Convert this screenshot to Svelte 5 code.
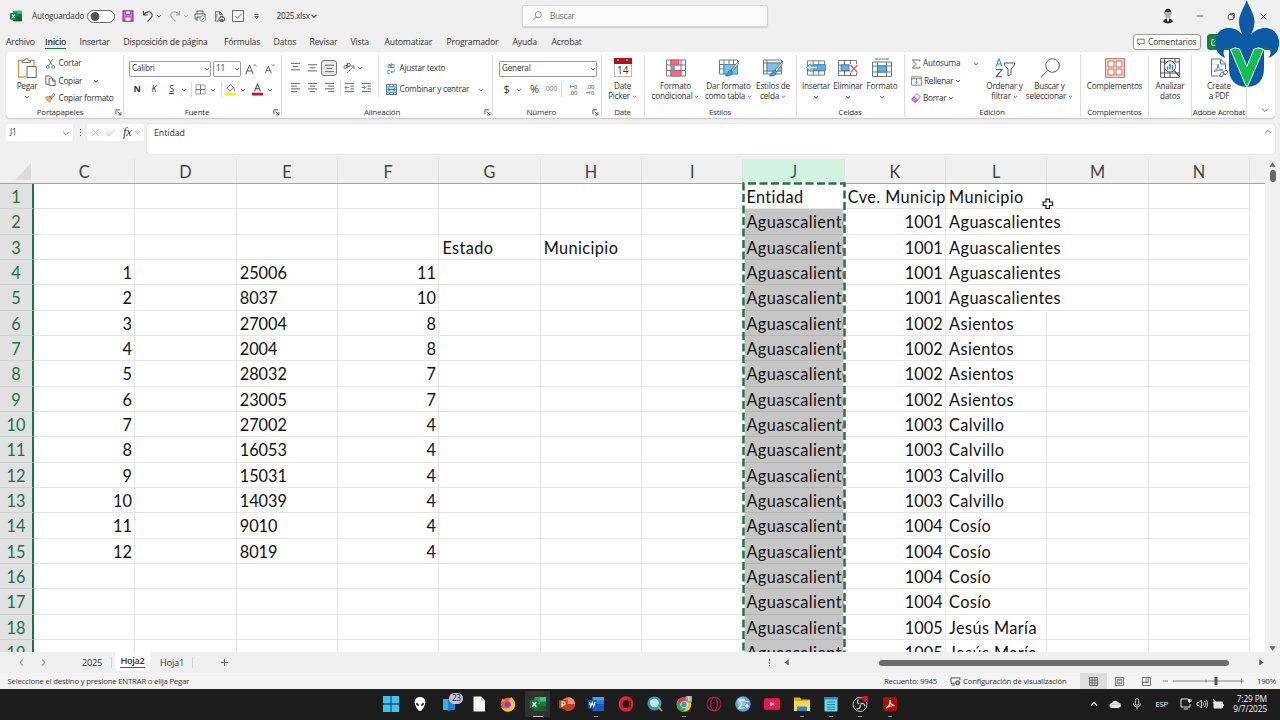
<script lang="ts">
	type Tool = { icon?: string; text?: string; w: number; h?: number; gap?: number; cls?: string };
	type Big = { icon: string; lines: string[]; w: number; caret?: boolean; below?: boolean };

	// stroke based icons, drawn in the viewBox given first
	const icons: Record<string, [string, string]> = {
		excel: ['0 0 16 16', '<rect x="4" y="1" width="12" height="14" rx="1" fill="#21a366"/><path d="M10 1h5a1 1 0 0 1 1 1v6h-6z" fill="#33c481"/><path d="M4 8h12v6a1 1 0 0 1-1 1H5a1 1 0 0 1-1-1z" fill="#185c37"/><path d="M10 5h6v5h-6z" fill="#107c41"/><rect x="0" y="4" width="9" height="9" rx="1" fill="#107c41"/><path d="M2.5 6l4 5M6.500 6l-4 5" stroke="#fff" stroke-width="1.400"/>'],
		caret: ['0 0 8 8', '<path d="M1.500 2.800L4 5.200 6.500 2.800" fill="none" stroke="#444" stroke-width="1.200"/>'],
		caretLight: ['0 0 8 8', '<path d="M1.500 2.800L4 5.200 6.500 2.800" fill="none" stroke="#aaa" stroke-width="1.200"/>'],
		save: ['0 0 12 12', '<path d="M1 1h10v10H1z" fill="#cf7be0" stroke="#9b35ad" stroke-width="1.300"/><path d="M3.500 1h5v3.500h-5zM3 7h6v4H3z" fill="#fff" stroke="#9b35ad" stroke-width=".8"/>'],
		undo: ['0 0 12 12', '<path d="M1.500 1v4h4M1.700 4.800C4 1.500 8 .8 9.600 3.200 11.500 6 9 8 5.500 11.500" fill="none" stroke="#444" stroke-width="1.100"/>'],
		redo: ['0 0 12 12', '<path d="M10.500 1v4h-4M10.300 4.800C8 1.500 4 .8 2.400 3.200 .5 6 3 8 6.500 11.500" fill="none" stroke="#aaa" stroke-width="1.100"/>'],
		print: ['0 0 12 12', '<path d="M3 4V1h6v3M3 9H1V4h10v3M3 11V7h4" fill="none" stroke="#555" stroke-width=".9"/><circle cx="8.700" cy="8.700" r="2.800" fill="#e8f5ec" stroke="#3aa565" stroke-width=".7"/><path d="M7.300 8.700l1 1 2-2" fill="none" stroke="#3aa565"/>'],
		preview: ['0 0 12 12', '<path d="M5 11H1.500V.8h4.700L9 3.500V5M6 .8V4h3" fill="none" stroke="#555" stroke-width=".9"/><path d="M5.500 7.500h6v3h-6zM7 7.500V6h3v1.500M7 9.500h3v2H7z" fill="#fff" stroke="#444" stroke-width=".9"/><path d="M3 3v5" stroke="#777"/>'],
		checkbox: ['0 0 12 12', '<rect x=".6" y=".6" width="10.800" height="10.800" fill="#fdfdfd" stroke="#555" stroke-width=".9"/><path d="M3 6.200l2.200 2.200L9.500 4" fill="none" stroke="#2f8f85"/>'],
		more: ['0 0 8 8', '<path d="M1.500 1.800h5" stroke="#444" stroke-width="1"/><path d="M1.800 4L4 6.200 6.200 4z" fill="none" stroke="#444" stroke-width=".9"/>'],
		search: ['0 0 12 12', '<circle cx="7.500" cy="4.500" r="3.700" fill="none" stroke="#666" stroke-width=".9"/><path d="M5 7.300L1 11.300" stroke="#666" stroke-width=".9"/>'],
		min: ['0 0 10 10', '<path d="M1 5h8" stroke="#444"/>'],
		restore: ['0 0 10 10', '<rect x="1.500" y="3" width="5.500" height="5.500" rx="1" fill="none" stroke="#444"/><path d="M3.500 1.500H7a1.500 1.500 0 0 1 1.500 1.500v3.500" fill="none" stroke="#444"/>'],
		close: ['0 0 10 10', '<path d="M1.800 1.800l6.400 6.400M8.200 1.800L1.800 8.200" stroke="#444"/>'],
		comment: ['0 0 10 10', '<path d="M1 1.500h8v5.500H4.500L2.500 9V7H1z" fill="none" stroke="#444" stroke-width=".9"/>'],
		share: ['0 0 10 10', '<path d="M4 2H1v7h7V6M3.500 6C4 4 5.500 3.500 9 3.500M7 1.500l2 2-2 2" fill="none" stroke="#fff"/>'],
		paste: ['0 0 20 20', '<path d="M6 2.500H1.500v16.500H9M13 2.500h4V8" fill="none" stroke="#e0963a" stroke-width="1.300"/><path d="M5.500 4.500v-2h2a2 2 0 0 1 4 0h2v2z" fill="#fff" stroke="#666" stroke-width=".9"/><path d="M10 8.500h9.200v11H10z" fill="#fff" stroke="#666"/>'],
		cut: ['0 0 12 12', '<path d="M3.500 1l4.700 7.500M8.500 1L3.800 8.500" stroke="#555" stroke-width=".9"/><circle cx="3" cy="9.800" r="1.500" fill="none" stroke="#2f86c6"/><circle cx="9" cy="9.800" r="1.500" fill="none" stroke="#2f86c6"/>'],
		copy: ['0 0 12 12', '<path d="M4 10H1V1h4l1.500 1.500" fill="none" stroke="#555"/><path d="M4.500 3.500h4l2.500 2.500v5.500H4.500zM8.300 3.500v3H11" fill="none" stroke="#555"/>'],
		brush: ['0 0 12 12', '<path d="M.8 5.500l4-1 2.500 3-2 3.700C3 10.500 1.500 8.500.8 5.500z" fill="#f0b25c" stroke="#c9822b" stroke-width=".8"/><path d="M4.800 4.200L7.500 7.300M6 5.700l3.500-4 1.300 1.300L7 6.800" fill="#fff" stroke="#555"/>'],
		border: ['0 0 12 12', '<path d="M1 1h10v10H1z" fill="none" stroke="#999"/><path d="M6 1v10M1 6h10" stroke="#666"/>'],
		fill: ['0 0 12 14', '<path d="M2 5.500L6 1.500l3.500 3.500-4 4z" fill="#fff" stroke="#555" stroke-width=".9"/><path d="M9.500 5c1.200 1.500 1 3 .6 4" fill="none" stroke="#2f86c6"/><rect x="0" y="10.500" width="12" height="3" fill="#fff200"/>'],
		fontColor: ['0 0 12 14', '<path d="M2.700 9L6 1l3.300 8M3.800 6.300h4.400" fill="none" stroke="#444" stroke-width="1.100"/><rect x="0" y="10.500" width="12" height="3" fill="#d0101c"/>'],
		grow: ['0 0 12 12', '<path d="M.8 11L4.500 2l3.700 9M2 8h5" fill="none" stroke="#555"/><path d="M8.500 3.200L10 1.500l1.500 1.700" fill="none" stroke="#2f86c6"/>'],
		shrink: ['0 0 12 12', '<path d="M1.500 11L4.700 3.500 8 11M2.800 8.300h4" fill="none" stroke="#555"/><path d="M8.500 1.500L10 3.200l1.500-1.700" fill="none" stroke="#2f86c6"/>'],
		alTop: ['0 0 12 12', '<path d="M1 1.500h10M3 5h6M1 8.500h10" stroke="#555"/>'],
		alMid: ['0 0 12 12', '<path d="M1 3h10M3 6.300h6M1 9.700h10" stroke="#555"/>'],
		alBot: ['0 0 12 12', '<path d="M1 3.500h10M3 7h6M1 10.500h10" stroke="#555"/>'],
		left: ['0 0 12 12', '<path d="M1 1.500h10M1 4.500h6.500M1 7.500h10M1 10.500h6.500" stroke="#555"/>'],
		center: ['0 0 12 12', '<path d="M1 1.500h10M3 4.500h6M1 7.500h10M3 10.500h6" stroke="#555"/>'],
		right: ['0 0 12 12', '<path d="M1 1.500h10M4.500 4.500H11M1 7.500h10M4.500 10.500H11" stroke="#555"/>'],
		orient: ['0 0 12 12', '<circle cx="2.500" cy="5" r="1.600" fill="none" stroke="#555" stroke-width=".9"/><circle cx="5.800" cy="3" r="1.600" fill="none" stroke="#555" stroke-width=".9"/><path d="M4 6V3M4.200 .5v3" fill="none" stroke="#555" stroke-width=".9"/><path d="M4 11l7-7M11 7V4H8" fill="none" stroke="#3a95a8"/>'],
		outdent: ['0 0 12 12', '<path d="M1 1.500h10M7 4.500h4M7 7.500h4M1 10.500h10" stroke="#555"/><path d="M5.500 6h-4.500M3 4L1 6l2 2" fill="none" stroke="#2f96b8"/>'],
		indent: ['0 0 12 12', '<path d="M1 1.500h10M7 4.500h4M7 7.500h4M1 10.500h10" stroke="#555"/><path d="M.5 6H5M3 4l2 2-2 2" fill="none" stroke="#2f96b8"/>'],
		returnArrow: ['0 0 6 6', '<path d="M5 .5v3H1M2.500 1.800L1 3.500l1.500 1.700" fill="none" stroke="#2f86c6"/>'],
		arrowLeft: ['0 0 6 5', '<path d="M6 2.500H1M2.800.8L1 2.500l1.800 1.700" fill="none" stroke="#2f86c6"/>'],
		arrowRight: ['0 0 6 5', '<path d="M0 2.500h5M3.200.8L5 2.500 3.200 4.200" fill="none" stroke="#2f86c6"/>'],
		merge: ['0 0 12 12', '<path d="M.5.5h11v11H.5z" fill="#fff" stroke="#555" stroke-width=".9"/><path d="M4 .5V3M8 .5V3M4 9v2.500M8 9v2.500" stroke="#555" stroke-width=".9"/><path d="M.5 3h11v6H.5z" fill="#c9e6f7" stroke="#2f86b8"/><path d="M2 6h8M3.500 4.500L2 6l1.500 1.500M8.500 4.500L10 6 8.500 7.500" fill="none" stroke="#24506e" stroke-width=".9"/>'],
		launcher: ['0 0 8 8', '<path d="M1 6V1h5M3 3l3.500 3.500M6.800 3.500v3.300H3.500" fill="none" stroke="#444" stroke-width="1"/>'],
		date: ['0 0 18 19', '<rect x=".5" y=".5" width="17" height="18" fill="#fff" stroke="#bbb"/><rect x="0" y="0" width="18" height="6" fill="#b3121d"/><path d="M3 2h2M12 2h2" stroke="#f4b9bc"/>'],
		condFmt: ['0 0 20 18', '<path d="M.5 1h19v16H.5zM.5 6h19M.5 11.500h19M5 1v16M15 1v16" fill="#fff" stroke="#666" stroke-width=".9"/><path d="M5 1h8v5H5zM5 11.500h10V17H5z" fill="#f26b78" stroke="#c93f50" stroke-width=".6"/><path d="M5 6h4v5.500H5z" fill="#6aa5dc"/>'],
		table: ['0 0 20 18', '<path d="M.5 1h18v14H.5zM.5 5.500h18M.5 10h18M5 1v14M10 1v14M14.500 1v14" fill="#fff" stroke="#666" stroke-width=".9"/><path d="M5 5.500h13.500V15H5z" fill="#7cc0ec" stroke="#3c87bd" stroke-width=".8"/><path d="M19.800 2L12 11l1.500 1.500L20 4z" fill="#fff" stroke="#555" stroke-width=".8"/><path d="M12 11c-2.500 0-3 3.500-5.500 6 4 .5 7-1 7-4.500z" fill="#3f9bdc" stroke="#1f6fae" stroke-width=".7"/>'],
		cellStyle: ['0 0 20 18', '<path d="M.5 1h18v14H.5zM.5 4h18M.5 12h18M4 1v14" fill="#fff" stroke="#666" stroke-width=".9"/><path d="M4 4h14.500v8H4z" fill="#7cc0ec" stroke="#3c87bd" stroke-width=".8"/><path d="M19.800 2L12 11l1.500 1.500L20 4z" fill="#fff" stroke="#555" stroke-width=".8"/><path d="M12 11c-2.500 0-3 3.500-5.500 6 4 .5 7-1 7-4.500z" fill="#3f9bdc" stroke="#1f6fae" stroke-width=".7"/>'],
		insert: ['0 0 21 18', '<path d="M1.500 1.500h18v15h-18zM1.500 6h18M1.500 12h18M7.500 1.500v15M13.500 1.500v15" fill="#fff" stroke="#666" stroke-width=".9"/><path d="M8 5.500h12.500v6H8z" fill="#5fb2e8" stroke="#2d7ab0" stroke-width=".8"/><path d="M12 7H5V4.500L.5 8.500 5 12.500V10h7z" fill="#bfe1f6" stroke="#3c8dc4" stroke-width=".8"/>'],
		remove: ['0 0 20 18', '<path d="M.5 1.500h18v15H.5zM.5 6h18M.5 12h18M6.500 1.500v15M12.500 1.500v15" fill="#fff" stroke="#666" stroke-width=".9"/><path d="M3 6h8v5.500H3z" fill="#5fb2e8" stroke="#2d7ab0" stroke-width=".8"/><path d="M12 5h8v9h-8z" fill="#fff"/><path d="M12.500 6l7 7.500M19.500 6l-7 7.500" stroke="#e05260" stroke-width="1.200"/>'],
		format: ['0 0 20 20', '<path d="M4 1h12M4 0v2M16 0v2" stroke="#3c87bd" stroke-width=".9"/><path d="M.5 4h19v14.500H.5zM.5 8h19M.5 14h19M5.500 4v14.500M14.500 4v14.500" fill="#fff" stroke="#666" stroke-width=".9"/><path d="M5.500 8h9v6h-9z" fill="#5fb2e8" stroke="#2d7ab0"/>'],
		sum: ['0 0 12 12', '<path d="M10.500 3V1.200H1.500L6.500 6l-5 4.800h9V9" fill="none" stroke="#555"/>'],
		fillDown: ['0 0 14 12', '<path d="M.7.7h12.600v10.600H.7zM.7 3h12.600" fill="#fff" stroke="#666"/><path d="M7 3.500V9M4.500 7L7 9.500 9.500 7" fill="none" stroke="#2f96b8"/>'],
		eraser: ['0 0 12 12', '<path d="M.8 7.500L7 .9l4.300 3.600-6 6.800z" fill="#fff" stroke="#9d46ae"/><path d="M.8 7.500l2.800-3 4.300 3.700-2.600 3z" fill="#cf8fdc" stroke="#9d46ae"/>'],
		sort: ['0 0 20 20', '<path d="M1 8.500L4 .8l3 7.700M2 6h4" fill="none" stroke="#2f96c8" stroke-width="1.100"/><path d="M1 11.500h6L1 18.800h6.200" fill="none" stroke="#555" stroke-width="1.100"/><path d="M9.500 5h10v2L16 11v5.500L13 18v-7L9.500 7z" fill="#fff" stroke="#555"/>'],
		find: ['0 0 20 20', '<circle cx="12.500" cy="7.500" r="6.800" fill="none" stroke="#555"/><path d="M7.700 12.500L.8 19.500" stroke="#555"/>'],
		addins: ['0 0 20 20', '<path d="M.7.7h18.600v18.600H.7z" fill="#fff" stroke="#d4593a" stroke-width="1.100"/><path d="M3 3h6v6H3zM11 3h6v6h-6zM3 11h6v6H3zM11 11h6v6h-6z" fill="none" stroke="#d4593a" stroke-width="1"/>'],
		analyze: ['0 0 20 20', '<path d="M.6.6h18.800v18.800H.6zM.6 4h18.800M.6 15h18.800M4.500 15v4.400M10 15v4.400M15 .6V4M4.500.6V15" fill="#fff" stroke="#555"/><circle cx="10" cy="8.500" r="5.600" fill="#fff" stroke="#555"/><path d="M14 12.500l5 5.500" stroke="#555" stroke-width="1.400"/><path d="M7.500 11.500v-3M10 11.500V5.500M12.500 11.500V7" stroke="#2f86c6" stroke-width="1.500"/>'],
		pdf: ['0 0 20 20', '<path d="M9 18H2.500V1h9l5 5v5M11.500 1v5h5" fill="none" stroke="#4a6fd0"/><path d="M5 13.500c3-1.500 4-4.500 4-7.500 0 4 2 6 5 6-4 0-6 .5-9 1.500z" fill="none" stroke="#4a6fd0" stroke-width=".9"/><path d="M10 18l3-4 2 1-2 4zM14 14l3-2 2 2-3 3z" fill="#fff" stroke="#4a6fd0"/>'],
		cancel: ['0 0 10 10', '<path d="M1 1l8 8M9 1L1 9" stroke="#b5b5b5"/>'],
		accept: ['0 0 12 10', '<path d="M1 5.500L4.200 8.700 11 1.500" fill="none" stroke="#b5b5b5"/>'],
		up: ['0 0 10 10', '<path d="M1.500 6.500L5 3l3.500 3.500" fill="none" stroke="#444"/>'],
		down: ['0 0 10 10', '<path d="M1.500 3.500L5 7l3.500-3.500" fill="none" stroke="#444"/>'],
		prev: ['0 0 10 10', '<path d="M6.500 1.500L3.500 5l3 3.500" fill="none" stroke="#999" stroke-width="1.200"/>'],
		next: ['0 0 10 10', '<path d="M3.500 1.500l3 3.500-3 3.500" fill="none" stroke="#999" stroke-width="1.200"/>'],
		plus: ['0 0 10 10', '<path d="M5 1v8M1 5h8" stroke="#555"/>'],
		triUp: ['0 0 8 8', '<path d="M4 1.500l3.500 5h-7z" fill="#666"/>'],
		triDown: ['0 0 8 8', '<path d="M4 6.500l3.500-5h-7z" fill="#666"/>'],
		triLeft: ['0 0 8 8', '<path d="M1.500 4l5-3.500v7z" fill="#666"/>'],
		triRight: ['0 0 8 8', '<path d="M6.500 4l-5-3.500v7z" fill="#555"/>'],
		display: ['0 0 12 10', '<path d="M5 7H1V1h10v2.500M2 9h3" fill="none" stroke="#444"/><circle cx="8.500" cy="6.500" r="2.300" fill="#999" stroke="#444"/><circle cx="8.500" cy="6.500" r=".7" fill="#fff"/>'],
		viewGrid: ['0 0 10 10', '<path d="M.5.5h9v9h-9zM.5 3.500h9M.5 6.500h9M3.500.5v9M6.500.5v9" fill="none" stroke="#444" stroke-width=".8"/>'],
		viewPage: ['0 0 10 10', '<path d="M.5.5h9v9h-9zM2.500 2.500h5v5h-5zM4 4h2M4 6h2" fill="none" stroke="#444" stroke-width=".8"/>'],
		viewBreak: ['0 0 10 10', '<path d="M.5.500h9v9h-9zM.5 6h4V.5M7 .5V6H4.500" fill="none" stroke="#444" stroke-width=".8"/>'],
		win: ['0 0 16 16', '<path d="M0 0h7.600v7.600H0zM8.400 0H16v7.600H8.400zM0 8.400h7.600V16H0zM8.400 8.400H16V16H8.400z" fill="#3fc3f5"/>'],
		alien: ['0 0 16 16', '<path d="M8 1c3.600 0 5.500 2.300 5.300 5.200C13 10 10 15 8 15S3 10 2.700 6.200C2.500 3.300 4.400 1 8 1z" fill="#fff"/><path d="M4 7c2 0 3 1.300 3 3-2 0-3-1-3-3zM12 7c-2 0-3 1.300-3 3 2 0 3-1 3-3z" fill="#1c1c1c"/>'],
		phone: ['0 0 16 16', '<path d="M1 3h12v11H9l-2 1.500L5 14H1z" fill="#1d7fd0"/><path d="M1 3h5v11H1z" fill="#35aee8"/>'],
		doc: ['0 0 16 16', '<path d="M2.500.5h7.500l4 4v11h-11.500z" fill="#f6f6f6"/><path d="M10 .5l4 4h-4z" fill="#bbb"/>'],
		firefox: ['0 0 16 16', '<circle cx="8" cy="8.800" r="7" fill="#ff5a36"/><path d="M11 1c3 2 4.500 5 4 8.500-.3 3-3 5.500-6 6C5 16 2 13.500 1 11c3 2.500 8 2 9-1s-1-4-2-4c1-2 2.500-3 3-5z" fill="#ffbd3d"/><circle cx="7.800" cy="8.500" r="3" fill="#7b3fe4"/><path d="M1 6l1.500-3.500L5 5z" fill="#ff9a2e"/>'],
		xl: ['0 0 16 16', '<path d="M4.500 1H16v14H4.500z" fill="#21a366"/><path d="M10 1h6v7h-6z" fill="#33c481"/><path d="M4.500 8H16v7H4.500z" fill="#185c37"/><path d="M10 5.500h6V10h-6z" fill="#107c41"/><rect x="0" y="4" width="8.500" height="8.500" rx="1" fill="#107c41"/><path d="M2.300 6l4 4.700M6.300 6l-4 4.700" stroke="#fff" stroke-width="1.300"/>'],
		ppt: ['0 0 16 16', '<circle cx="9.300" cy="8" r="6.700" fill="#ed6c47"/><path d="M9.300 1.300A6.700 6.700 0 0 1 16 8H9.300z" fill="#ff8f6b"/><path d="M9.300 8H16a6.700 6.700 0 0 1-12 4z" fill="#c43e1c"/><rect x="0" y="4" width="8.500" height="8.500" rx="1" fill="#c43e1c"/><path d="M3 11V5.900h1.600a1.500 1.500 0 0 1 0 3H3" fill="none" stroke="#fff" stroke-width="1.200"/>'],
		word: ['0 0 16 16', '<path d="M4.500 1H16v4H4.500z" fill="#41a5ee"/><path d="M4.500 4.500H16V8H4.500z" fill="#2b7cd3"/><path d="M4.500 8H16v7H4.500z" fill="#185abd"/><rect x="0" y="4" width="8.500" height="8.500" rx="1" fill="#185abd"/><path d="M1.500 6l1.300 4.500L4.300 6.500l1.400 4L7 6" fill="none" stroke="#fff" stroke-width="1.100"/>'],
		opera: ['0 0 16 16', '<ellipse cx="8" cy="8" rx="5.500" ry="5.800" fill="none" stroke="#e3202f" stroke-width="3.800"/><path d="M12 4.500v7" stroke="#a0121f" stroke-width="2"/>'],
		globe: ['0 0 16 16', '<circle cx="7.500" cy="7.500" r="7" fill="#2b9fb3"/><path d="M3 4c3-2 6-1 8 1-1 3-4 3-5 6-2-1-4-4-3-7z" fill="#9fd08a"/><circle cx="7.500" cy="7" r="3.800" fill="#bfe6ee" stroke="#e8f4f6"/><path d="M10.500 10l4.500 5" stroke="#c9a13b" stroke-width="1.800"/>'],
		chrome: ['0 0 16 16', '<circle cx="8" cy="8.500" r="7.300" fill="#fbc116"/><path d="M1.500 5A7.300 7.300 0 0 1 14.500 5H8L5 10z" fill="#e33b2e"/><path d="M1.500 5a7.300 7.300 0 0 0 6 10.800L11 10H5z" fill="#2da94f"/><circle cx="8" cy="8.500" r="3.600" fill="#fff"/><circle cx="8" cy="8.500" r="2.700" fill="#4285f4"/><circle cx="13.300" cy="2.700" r="4" fill="#999"/><path d="M12 0l1 5M14 0v5" stroke="#ddd"/>'],
		gx: ['0 0 16 16', '<circle cx="8" cy="8" r="7" fill="none" stroke="#b0173f" stroke-width="1.200"/><ellipse cx="8" cy="8" rx="3.300" ry="6.500" fill="none" stroke="#c91d4b" stroke-width="1.200"/>'],
		sigma: ['0 0 16 16', '<circle cx="8" cy="8" r="7.700" fill="#5d9fd2"/><circle cx="6.500" cy="6" r="4.500" fill="#8fc0e4"/><path d="M9 5V4H4l3 4-3 4h5v-1M10 10h4M12 8v4M10.500 5.500h3" fill="none" stroke="#fff" stroke-width="1.200"/>'],
		youtube: ['0 0 16 16', '<rect x="0" y="2.300" width="16" height="11.400" rx="1.500" fill="#f0134d"/><path d="M6.500 5.500L10.500 8l-4 2.500z" fill="#fff"/>'],
		folder: ['0 0 16 16', '<path d="M0 1.500h6l1.500 2H16V15H0z" fill="#e9a825"/><path d="M0 5h16v10H0z" fill="#ffd75e"/><path d="M3 15v-3.500a1 1 0 0 1 1-1h8a1 1 0 0 1 1 1V15z" fill="#2d86cf"/>'],
		notepad: ['0 0 16 16', '<rect x="1.500" y="1" width="13" height="14.500" rx="1" fill="#6fd3ee"/><path d="M1.500 1h13v2.500h-13z" fill="#2a8fb0"/><path d="M4 6h8M4 8.500h8M4 11h8M4 13.300h8" stroke="#1c7c9c" stroke-width=".9"/>'],
		obs: ['0 0 16 16', '<circle cx="8" cy="8.500" r="7" fill="#222" stroke="#ccc" stroke-width="1"/><path d="M7.500 8c-2.500-.5-2.500-3-1-4.500M8 9c1 2.500-1 4.200-3.500 3.700M8.500 8.300c2-1.800 4.500-.5 4.300 2" fill="none" stroke="#ccc" stroke-width="1.200"/><circle cx="14" cy="2.500" r="3.600" fill="#e80c12"/>'],
		acrobat: ['0 0 16 16', '<rect x="1" y="1" width="14" height="14" rx="2" fill="#b30b00"/><path d="M4 12c3-1.500 4.300-5 4-8 0 4 2 5.500 4.500 5.500C9 9.500 7 10 4 12z" fill="none" stroke="#fff" stroke-width="1.200"/>'],
		cloud: ['0 0 12 10', '<path d="M3 9a2.500 2.500 0 0 1 0-5 3.300 3.300 0 0 1 6-.5A2.700 2.700 0 0 1 9.500 9z" fill="#e9e9e9"/><path d="M2 5.500l9-.5" stroke="#aaa" stroke-width=".7"/>'],
		mic: ['0 0 10 12', '<rect x="3.300" y=".7" width="3.400" height="6.500" rx="1.700" fill="none" stroke="#ccc"/><path d="M1.500 5.500a3.500 3.500 0 0 0 7 0M5 9v2.500" fill="none" stroke="#ccc"/>'],
		net: ['0 0 12 12', '<path d="M8 1H1v8h9V6M3.500 11h4.500M9.500 5V1M8.500 1v2.500h2.500V1" fill="none" stroke="#e5e5e5"/>'],
		vol: ['0 0 12 12', '<path d="M1 4.500h2L5.500 2v8L3 7.500H1zM7 4.500c.8 1 .8 2 0 3M8.500 3c1.600 2 1.600 4 0 6M10 1.800c2 2.500 2 6 0 8.400" fill="none" stroke="#e5e5e5" stroke-width=".9"/>'],
		battery: ['0 0 12 12', '<path d="M2 4h8.500v6H2zM11.500 6v2M1 1l3 3M2 2v4" fill="#e5e5e5" stroke="#e5e5e5"/>'],
		caretUp: ['0 0 8 8', '<path d="M1 5.500L4 2.500l3 3" fill="none" stroke="#eee" stroke-width="1.100"/>']
	};

	const quick: Tool[] = [
		{ icon: 'save', w: 12, gap: 7 },
		{ icon: 'undo', w: 12, gap: 7.5 },
		{ icon: 'caret', w: 6, gap: 2 },
		{ icon: 'redo', w: 12, gap: 7 },
		{ icon: 'caretLight', w: 6, gap: 2 },
		{ icon: 'print', w: 12, gap: 5 },
		{ icon: 'preview', w: 11, gap: 8 },
		{ icon: 'checkbox', w: 12, gap: 7 },
		{ icon: 'more', w: 7, gap: 9.5 }
	];

	const menu: [string, number][] = [
		['Archivo', 39], ['Inicio', 34.5], ['Insertar', 44], ['Disposición de página', 100.5],
		['Fórmulas', 49.5], ['Datos', 36], ['Revisar', 41], ['Vista', 34], ['Automatizar', 62],
		['Programador', 66], ['Ayuda', 39], ['Acrobat', 40]
	];

	const fontRow: Tool[] = [
		{ text: 'N', w: 12, gap: 7, cls: 'bold' },
		{ text: 'K', w: 12, gap: 5, cls: 'italic' },
		{ text: 'S', w: 12, gap: 5.5, cls: 'under' },
		{ icon: 'caret', w: 6, gap: 3 },
		{ w: 1, gap: 4, cls: 'rule' },
		{ icon: 'border', w: 11, gap: 3.5 },
		{ icon: 'caret', w: 6, gap: 4 },
		{ w: 1, gap: 5, cls: 'rule' },
		{ icon: 'fill', w: 11, h: 13, gap: 3 },
		{ icon: 'caret', w: 6, gap: 3.500 },
		{ icon: 'fontColor', w: 11, h: 13, gap: 6.500 },
		{ icon: 'caret', w: 6, gap: 4 }
	];

	const alignTop: Tool[] = [
		{ icon: 'alTop', w: 11, gap: 7.500 },
		{ icon: 'alMid', w: 11, gap: 6.3 },
		{ icon: 'alBot', w: 16, h: 16, gap: 3.7, cls: 'on' },
		{ icon: 'orient', w: 12, gap: 5.500 },
		{ icon: 'caret', w: 6, gap: 2 }
	];
	const alignBottom: Tool[] = [
		{ icon: 'left', w: 11, gap: 7.500 },
		{ icon: 'center', w: 11, gap: 6.3 },
		{ icon: 'right', w: 11, gap: 6.3 },
		{ w: 1, gap: 4.500, cls: 'rule' },
		{ icon: 'outdent', w: 11, gap: 3 },
		{ icon: 'indent', w: 11, gap: 6 }
	];

	const numberRow: Tool[] = [
		{ text: '$', w: 10, gap: 8.5, cls: 'money' },
		{ icon: 'caret', w: 6, gap: 4 },
		{ text: '%', w: 12, gap: 7, cls: 'pct' },
		{ text: '000', w: 14, gap: 4, cls: 'zeros' },
		{ w: 1, gap: 2.500, cls: 'rule' }
	];

	const styles: Big[] = [
		{ icon: 'condFmt', lines: ['Formato', 'condicional'], w: 62, caret: true },
		{ icon: 'table', lines: ['Dar formato', 'como tabla'], w: 44, caret: true },
		{ icon: 'cellStyle', lines: ['Estilos de', 'celda'], w: 45, caret: true }
	];
	const cells: Big[] = [
		{ icon: 'insert', lines: ['Insertar'], w: 39, below: true },
		{ icon: 'remove', lines: ['Eliminar'], w: 25, below: true },
		{ icon: 'format', lines: ['Formato'], w: 43, below: true }
	];
	const editing: Big[] = [
		{ icon: 'sort', lines: ['Ordenar y', 'filtrar'], w: 38, caret: true },
		{ icon: 'find', lines: ['Buscar y', 'seleccionar'], w: 52, caret: true }
	];

	const columns = ['C', 'D', 'E', 'F', 'G', 'H', 'I', 'J', 'K', 'L', 'M', 'N'];
	const codes = ['25006', '8037', '27004', '2004', '28032', '23005', '27002', '16053', '15031', '14039', '9010', '8019'];
	const totals = [11, 10, 8, 8, 7, 7, 4, 4, 4, 4, 4, 4];
	const towns = ['Aguascalientes', 'Asientos', 'Calvillo', 'Cosío', 'Jesús María'];

	function cell(col: string, row: number): string {
		const i = row - 4;
		const inList = i >= 0 && i < codes.length;
		const block = Math.floor((row - 2) / 4);
		switch (col) {
			case 'C':
				return inList ? String(i + 1) : '';
			case 'E':
				return inList ? codes[i] : '';
			case 'F':
				return inList ? String(totals[i]) : '';
			case 'G':
				return row === 3 ? 'Estado' : '';
			case 'H':
				return row === 3 ? 'Municipio' : '';
			case 'J':
				return row === 1 ? 'Entidad' : 'Aguascalientes';
			case 'K':
				return row === 1 ? 'Cve. Municipio' : String(1001 + block);
			case 'L':
				return row === 1 ? 'Municipio' : towns[block];
		}
		return '';
	}

	function cellClass(col: string, row: number): string {
		const list = [];
		if (col === 'C' || col === 'F' || (col === 'K' && row > 1)) list.push('num');
		if ('GHJL'.includes(col) || row === 1) list.push('words');
		if (col === 'J' || col === 'K') list.push('clip');
		if (col === 'J' && row > 1) list.push('picked');
		if (col === 'L' && row > 1 && row < 6) list.push('spill');
		return list.join(' ');
	}

	const rows = Array.from({ length: 19 }, (_, i) => i + 1);

	const apps = [
		'win', 'alien', 'phone', 'doc', 'firefox', 'xl', 'ppt', 'word', 'opera',
		'globe', 'chrome', 'gx', 'sigma', 'youtube', 'folder', 'notepad', 'obs', 'acrobat'
	];
	const running = ['word', 'chrome', 'folder', 'notepad', 'obs', 'acrobat'];
</script>

{#snippet icon(name: string, w: number, h: number = w)}
	<svg class="icon" width={w} height={h} viewBox={icons[name][0]}>{@html icons[name][1]}</svg>
{/snippet}

{#snippet tools(list: Tool[])}
	{#each list as t}
		<span class="tool {t.cls ?? ''}" style="width: {t.w}px; margin-left: {t.gap}px">
			{#if t.icon}{@render icon(t.icon, t.cls === 'on' ? 11 : t.w, t.cls === 'on' ? 11 : (t.h ?? t.w))}{:else}{t.text ?? ''}{/if}
		</span>
	{/each}
{/snippet}

{#snippet big(b: Big)}
	<div class="big" style="width: {b.w}px">
		<div class="big-icon">{@render icon(b.icon, 20)}</div>
		{#each b.lines as line, i}
			<div class="big-line">
				{line}{#if b.caret && i === b.lines.length - 1}&nbsp;{@render icon('caret', 5)}{/if}
			</div>
		{/each}
		{#if b.below}<div class="big-line">{@render icon('caret', 6)}</div>{/if}
	</div>
{/snippet}

<div class="window">
	<header class="titlebar">
		{@render icon('excel', 12)}
		<span class="autosave">Autoguardado</span>
		<span class="toggle"></span>
		{@render tools(quick)}
		<span class="filename">2025.xlsx</span>
		{@render icon('caret', 8)}
		<div class="search">
			{@render icon('search', 10)}
			<span>Buscar</span>
		</div>
		<div class="controls">
			<svg class="avatar" width="16" height="16" viewBox="0 0 16 16">
				<circle cx="8" cy="8" r="8" fill="#fafafa" />
				<ellipse cx="8" cy="6.500" rx="3" ry="4.200" fill="#b4b4b4" />
				<path d="M4.800 6.500C4 2 6 .8 8 .8S12 2 11.200 6.500L10.500 4h-5z" fill="#333" />
				<path d="M3 13.500c.5-2 2.500-2.500 3.500-3L8 12.500l1.500-2c1 .5 3 1 3.500 3-3 2.500-7 2.500-10 0z" fill="#222" />
				<path d="M6.500 10.500L8 14.500l1.500-4z" fill="#fff" />
			</svg>
			{@render icon('min', 8)}
			{@render icon('restore', 9)}
			{@render icon('close', 9)}
		</div>
	</header>

	<nav class="menu">
		{#each menu as [label, width]}
			<span class="menu-item" style="width: {width}px">
				<span class:active={label === 'Inicio'}>{label}</span>
			</span>
		{/each}
		<div class="menu-right">
			<button class="comments">{@render icon('comment', 8)} Comentarios</button>
			<button class="share">{@render icon('share', 8)} Compartir {@render icon('caret', 5)}</button>
		</div>
	</nav>

	<section class="ribbon">
		<div class="group clipboard">
			<div class="body">
				<div class="big paste">
					<div class="big-icon">{@render icon('paste', 20)}</div>
					<div class="big-line">Pegar</div>
					<div class="big-line">{@render icon('caret', 6)}</div>
				</div>
				<div class="list">
					<div>{@render icon('cut', 11)}<span>Cortar</span></div>
					<div>{@render icon('copy', 11)}<span>Copiar</span><i class="far">{@render icon('caret', 6)}</i></div>
					<div>{@render icon('brush', 11)}<span>Copiar formato</span></div>
				</div>
			</div>
			<footer>Portapapeles<i>{@render icon('launcher', 7)}</i></footer>
		</div>

		<div class="group font">
			<div class="body two">
				<div class="row">
					<span class="combo face">Calibri {@render icon('caret', 6)}</span>
					<span class="combo size">11 {@render icon('caret', 6)}</span>
					<span class="step">{@render icon('grow', 12)}</span>
					<span class="step">{@render icon('shrink', 11)}</span>
				</div>
				<div class="row">{@render tools(fontRow)}</div>
			</div>
			<footer>Fuente<i>{@render icon('launcher', 7)}</i></footer>
		</div>

		<div class="group align">
			<div class="body">
				<div class="two align-tools">
					<div class="row">{@render tools(alignTop)}</div>
					<div class="row">{@render tools(alignBottom)}</div>
				</div>
				<div class="two wrap">
					<div class="row">
						<span class="ab"><b>ab</b><b>c{@render icon('returnArrow', 5)}</b></span>
						<span>Ajustar texto</span>
					</div>
					<div class="row">
						{@render icon('merge', 11)}
						<span>Combinar y centrar</span>
						<i class="merge-caret">{@render icon('caret', 6)}</i>
					</div>
				</div>
			</div>
			<footer>Alineación<i>{@render icon('launcher', 7)}</i></footer>
		</div>

		<div class="group number">
			<div class="body two">
				<div class="row"><span class="combo general">General {@render icon('caret', 6)}</span></div>
				<div class="row">
					{@render tools(numberRow)}
					<span class="dec"><b>{@render icon('arrowLeft', 5)}0</b><b>.00</b></span>
					<span class="dec"><b>.00</b><b>{@render icon('arrowRight', 5)}0</b></span>
				</div>
			</div>
			<footer>Número<i>{@render icon('launcher', 7)}</i></footer>
		</div>

		<div class="group date">
			<div class="body">
				<div class="big fluid">
					<div class="big-icon calendar">{@render icon('date', 18, 19)}<span>14</span></div>
					<div class="big-line">Date</div>
					<div class="big-line">Picker&nbsp;{@render icon('caret', 5)}</div>
				</div>
			</div>
			<footer>Date</footer>
		</div>

		<div class="group styles">
			<div class="body">{#each styles as b}{@render big(b)}{/each}</div>
			<footer>Estilos</footer>
		</div>

		<div class="group cells">
			<div class="body">{#each cells as b}{@render big(b)}{/each}</div>
			<footer>Celdas</footer>
		</div>

		<div class="group editing">
			<div class="body">
				<div class="list">
					<div>{@render icon('sum', 10)}<span>Autosuma</span><i class="far">{@render icon('caret', 6)}</i></div>
					<div>{@render icon('fillDown', 11, 10)}<span>Rellenar</span><i>{@render icon('caret', 6)}</i></div>
					<div>{@render icon('eraser', 10)}<span>Borrar</span><i>{@render icon('caret', 6)}</i></div>
				</div>
				{#each editing as b}{@render big(b)}{/each}
			</div>
			<footer>Edición</footer>
		</div>

		<div class="group addins">
			<div class="body">{@render big({ icon: 'addins', lines: ['Complementos'], w: 68 })}</div>
			<footer>Complementos</footer>
		</div>
		<div class="group analyze">
			<div class="body">{@render big({ icon: 'analyze', lines: ['Analizar', 'datos'], w: 42 })}</div>
		</div>
		<div class="group acrobat">
			<div class="body">{@render big({ icon: 'pdf', lines: ['Create', 'a PDF'], w: 54 })}</div>
			<footer>Adobe Acrobat</footer>
		</div>
		<div class="collapse">{@render icon('down', 8)}</div>
	</section>

	<section class="formula">
		<div class="namebox">J1 {@render icon('down', 8)}</div>
		<span class="dots"></span>
		<div class="fx">
			{@render icon('cancel', 9)}
			{@render icon('accept', 11, 9)}
			<em>fx</em>
			{@render icon('caretLight', 7)}
		</div>
		<div class="input"><span>Entidad</span>{@render icon('up', 8)}</div>
	</section>

	<section class="sheet">
		<div class="grid">
			<div class="heads">
				<div class="corner"><svg width="16" height="17" viewBox="0 0 16 17"><path d="M16 0v17H0z" fill="#dcdcdc" /></svg></div>
				{#each columns as c}
					<div class="head" class:current={c === 'J'}>{c}</div>
				{/each}
			</div>
			{#each rows as r}
				<div class="line">
					<div class="rownum">{r}</div>
					{#each columns as c}
						<div class="cell {cellClass(c, r)}">{cell(c, r)}</div>
					{/each}
				</div>
			{/each}
			<svg class="ants" width="104" height="480" viewBox="0 0 104 480">
				<path d="M1.500 480V1.500H102.500V480" fill="none" stroke="#fff" stroke-width="2.500" />
				<path d="M1.500 480V1.500H102.500V480" fill="none" stroke="#217346" stroke-width="2.500" stroke-dasharray="8 3.500" />
			</svg>
			<svg class="pointer" width="12" height="12" viewBox="0 0 12 12">
				<path d="M4 1.200h3.500V4h3v3.500h-3v3H4v-3H1.200V4H4z" fill="#fff" stroke="#111" stroke-width="1.200" />
			</svg>
		</div>
		<div class="vscroll">
			{@render icon('triUp', 7)}
			<span></span>
			<div>{@render icon('triDown', 7)}</div>
		</div>
	</section>

	<div class="sheets">
		<div class="nav">{@render icon('prev', 9)}{@render icon('next', 9)}</div>
		<span class="sheet-tab">2025</span>
		<span class="sheet-tab selected"><b>Hoja2</b></span>
		<span class="sheet-tab last">Hoja1</span>
		<span class="add">{@render icon('plus', 9)}</span>
		<div class="hscroll">
			<span class="dots"></span>
			{@render icon('triLeft', 7)}
			<span class="track"><span class="thumb"></span></span>
			{@render icon('triRight', 7)}
		</div>
	</div>

	<div class="status">
		<span class="hint">Seleccione el destino y presione ENTRAR o elija Pegar</span>
		<div class="status-right">
			<span class="count">Recuento: 9945</span>
			{@render icon('display', 11, 9)}
			<span class="config">Configuración de visualización</span>
			<span class="view on">{@render icon('viewGrid', 9)}</span>
			<span class="view">{@render icon('viewPage', 9)}</span>
			<span class="view">{@render icon('viewBreak', 9)}</span>
			<svg width="84" height="10" viewBox="0 0 84 10">
				<path d="M3 5h5M13 5h66M81.500 2.500v5M79 5h5" fill="none" stroke="#777" stroke-width=".9" />
				<path d="M46 3.500v3" stroke="#777" />
				<path d="M54.500 1v8h3V1z" fill="#555" />
			</svg>
			<span class="zoom">190%</span>
		</div>
	</div>

	<footer class="taskbar">
		<div class="apps">
			{#each apps as app}
				<div class="app" class:focused={app === 'xl'} class:running={running.includes(app)}>
					{@render icon(app, 16)}
					{#if app === 'phone'}<span class="badge">23</span>{/if}
				</div>
			{/each}
		</div>
		<div class="tray">
			{@render icon('caretUp', 8)}
			{@render icon('cloud', 12, 10)}
			{@render icon('mic', 10, 12)}
			<span class="lang">ESP</span>
			{@render icon('net', 12)}
			{@render icon('vol', 12)}
			{@render icon('battery', 12)}
			<div class="clock"><span>7:29 PM</span><span>9/7/2025</span></div>
		</div>
	</footer>

	<svg class="emblem" width="66" height="88" viewBox="0 0 66 88">
		<path d="M14 48V68Q14 86 31.700 87Q49 86 49 68V48Z" fill="#0a5aa5" />
		<path d="M31.700 0C29 8 24 14 24 22C24 27 26 31 27.500 35C22 27 8 25 2.500 34C-2 43 0 54 10.500 58C7 53 8 48 14 47.500C20 48 24 50 31.700 57C39 50 43 48 50 47.500C56 48 57 53 53.500 58C64 54 67 43 61.500 34C56 25 42 27 36 35C37.500 31 39.500 27 39.500 22C39.500 14 34.500 8 31.700 0Z" fill="#0a5aa5" />
		<path d="M15.500 49.500Q20 46.500 24.500 49L31.800 66.500L39 49Q44 46.500 48.500 49.500L32.800 86H31Z" fill="#12bf4d" stroke="#fff" stroke-width="1" />
	</svg>
</div>

<style>
	:global(body) {
		margin: 0;
	}

	.window {
		position: relative;
		display: flex;
		flex-direction: column;
		width: 1280px;
		height: 720px;
		overflow: hidden;
		background: #f0f0f0;
		color: #333;
		font-family: 'Open Sans', 'Noto Sans', sans-serif;
		font-size: 8.2px;
		letter-spacing: -0.23px;
		line-height: 10.5px;
		white-space: nowrap;
	}

	.icon {
		display: block;
		flex: none;
	}

	i,
	em {
		font-style: normal;
	}

	/* Title bar */
	.titlebar {
		display: flex;
		align-items: center;
		flex: none;
		height: 32px;
		padding-left: 10px;
	}

	.autosave {
		width: 50px;
		margin-left: 10px;
	}

	.toggle {
		box-sizing: border-box;
		width: 28px;
		height: 13px;
		margin-left: 5px;
		border: 1px solid #666;
		border-radius: 7px;
		background: radial-gradient(circle at 7px 5.5px, #555 4px, #fff 4.8px);
	}

	.filename {
		width: 33px;
		margin-left: 16.5px;
	}

	.search {
		box-sizing: border-box;
		display: flex;
		align-items: center;
		gap: 8px;
		width: 246px;
		height: 22px;
		margin-left: 204.5px;
		padding-left: 9px;
		border: 1px solid #d6d6d6;
		border-radius: 2px;
		background: #fbfbfb;
		color: #666;
		box-shadow: 0 1px 1px #ccc;
	}

	.controls {
		display: flex;
		align-items: center;
		margin-left: auto;
		padding-right: 12px;
		gap: 23px;
	}

	.avatar {
		margin-right: -3px;
	}

	/* Menu */
	.menu {
		display: flex;
		flex: none;
		height: 20px;
		padding-left: 6px;
		font-size: 8.7px;
		letter-spacing: -0.2px;
	}

	.menu-item {
		padding-top: 5px;
	}

	.menu .active {
		display: inline-block;
		height: 11px;
		border-bottom: 1.5px solid #217346;
		font-weight: 600;
		letter-spacing: -0.25px;
	}

	.menu-right {
		display: flex;
		gap: 6px;
		margin-left: auto;
		padding: 2px 7px 0 0;
	}

	.menu-right button {
		box-sizing: border-box;
		display: flex;
		align-items: center;
		gap: 3px;
		height: 16px;
		padding: 0 4px 0 3px;
		border: 1px solid #999;
		border-radius: 3px;
		background: #fff;
		color: #333;
		font: inherit;
		font-size: 8.4px;
		letter-spacing: -0.15px;
	}

	.menu-right .comments {
		width: 68px;
	}

	.menu-right .share {
		width: 66px;
		border-color: #12803f;
		background: #12803f;
		color: #fff;
		font-weight: 600;
	}

	/* Ribbon */
	.ribbon {
		display: flex;
		flex: none;
		height: 66px;
		margin: 0 5px 0 6px;
		border-radius: 4px;
		background: #fff;
		box-shadow: 0 1px 1px #c8c8c8;
	}

	.group {
		position: relative;
		box-sizing: border-box;
		display: flex;
		flex-direction: column;
		flex: none;
		height: 62px;
		margin-top: 3px;
		border-right: 1px solid #dcdcdc;
	}

	.clipboard { width: 118px; }
	.font { width: 158px; }
	.align { width: 211px; }
	.number { width: 108.5px; }
	.date { width: 43px; }
	.styles { width: 152px; }
	.cells { width: 108px; }
	.editing { width: 176px; }
	.addins { width: 68.5px; }
	.analyze { width: 43px; }
	.acrobat { width: 55px; }

	.body {
		display: flex;
		height: 51.5px;
	}

	.group footer {
		display: flex;
		justify-content: center;
		height: 10.5px;
		font-size: 8px;
	}

	.group footer i {
		position: absolute;
		right: 1.5px;
		bottom: 1px;
	}

	.clipboard footer {
		padding-right: 9px;
	}

	.font footer {
		padding-right: 11px;
	}

	.align footer {
		padding-right: 10px;
	}

	.number footer {
		padding-right: 11px;
	}

	.big {
		display: flex;
		flex-direction: column;
		align-items: center;
		flex: none;
	}

	.big.paste {
		width: 36px;
		padding-left: 3px;
	}

	.big.fluid {
		width: 100%;
	}

	.big-icon {
		display: flex;
		align-items: center;
		height: 25.5px;
	}

	.big-line {
		display: flex;
		align-items: center;
		height: 10.7px;
	}

	.calendar {
		position: relative;
	}

	.calendar span {
		position: absolute;
		top: 10px;
		left: 3.5px;
		font-size: 10px;
		letter-spacing: 0;
	}

	.list {
		flex: none;
		padding-left: 1px;
	}

	.list div {
		display: flex;
		align-items: center;
		height: 17.2px;
	}

	.list span {
		margin: 0 2px 0 2.5px;
	}

	.editing .list {
		width: 75px;
		padding-left: 6px;
		padding-right: 0;
	}

	.editing .list .far {
		margin-left: auto;
		padding-right: 7px;
	}

	.clipboard .list {
		padding-left: 0;
	}

	.clipboard .list .far {
		margin-left: 9px;
	}

	.two {
		display: flex;
		flex-direction: column;
	}

	.row {
		display: flex;
		align-items: center;
		height: 21px;
	}

	.row:first-child {
		padding-top: 3px;
	}

	.combo {
		box-sizing: border-box;
		display: flex;
		align-items: center;
		justify-content: space-between;
		height: 16px;
		padding: 0 0 0 2px;
		border: 1px solid #999;
		border-radius: 2px;
	}

	.face {
		width: 82px;
		margin-left: 5px;
	}

	.size {
		width: 28px;
		margin-left: 2px;
	}

	.general {
		width: 98px;
		margin-left: 6px;
	}

	.step {
		margin-left: 4px;
	}

	.step + .step {
		margin-left: 7px;
	}

	.tool {
		display: flex;
		align-items: center;
		justify-content: center;
		flex: none;
	}

	.tool.rule {
		width: 1px;
		height: 15px;
		background: #dcdcdc;
	}

	.tool.on {
		box-sizing: border-box;
		height: 16px;
		border: 1px solid #777;
		border-radius: 3px;
		background: #ececec;
	}

	.tool.bold {
		font-size: 9px;
		font-weight: 700;
	}

	.tool.italic {
		font-size: 9px;
		font-style: italic;
	}

	.tool.under {
		font-size: 9px;
		text-decoration: underline;
	}

	.tool.money,
	.tool.pct {
		font-size: 11px;
	}

	.tool.zeros {
		font-size: 7px;
		color: #777;
	}

	.align-tools {
		width: 96px;
		margin-right: 0;
		border-right: 1px solid #dcdcdc;
		height: 42px;
	}

	.wrap {
		padding-left: 6.5px;
	}

	.wrap .row > span:nth-child(2) {
		margin-left: 3px;
	}

	.ab {
		display: flex;
		flex-direction: column;
		align-items: center;
		width: 11px;
	}

	.ab b,
	.dec b {
		display: flex;
		align-items: center;
		font-weight: 400;
		font-size: 6.5px;
		line-height: 6px;
	}

	.dec b {
		font-size: 5.8px;
	}

	.merge-caret {
		margin-left: 9px;
	}

	.dec {
		display: flex;
		flex-direction: column;
		align-items: flex-end;
		width: 12px;
		margin-left: 3px;
	}

	.dec + .dec {
		margin-left: 5px;
	}

	.collapse {
		display: flex;
		align-items: flex-end;
		margin-left: 14px;
		padding-bottom: 4px;
	}

	/* Formula bar */
	.formula {
		display: flex;
		flex: none;
		height: 30px;
		margin: 6px 5px 5px 6px;
	}

	.namebox,
	.fx {
		box-sizing: border-box;
		display: flex;
		align-items: center;
		height: 17px;
		background: #fff;
		border-radius: 2px;
	}

	.namebox {
		justify-content: space-between;
		width: 67px;
		padding: 0 3px 0 4px;
	}

	.dots {
		width: 1.5px;
		height: 7.5px;
		background: repeating-linear-gradient(#666 0 1.5px, transparent 1.5px 3px);
	}

	.formula .dots {
		margin: 5px 6px 0 6.5px;
	}

	.fx {
		gap: 5px;
		width: 57px;
		padding-left: 4px;
	}

	.fx em {
		margin: 0 -3px 0 2px;
		font-family: 'Liberation Serif', serif;
		font-size: 12.5px;
		font-style: italic;
	}

	.input {
		display: flex;
		justify-content: space-between;
		flex: 1;
		margin-left: 3px;
		padding: 4px 3px 0 7px;
		border-radius: 3px;
		background: #fff;
		box-shadow: 0 0 1px #aaa;
		font-size: 8.8px;
		letter-spacing: -0.05px;
	}

	/* Sheet */
	.sheet {
		display: flex;
		flex: none;
		height: 493px;
	}

	.grid {
		position: relative;
		width: 1265px;
		overflow: hidden;
		background: #fff;
		color: #111;
		font-family: Lato, 'Open Sans', sans-serif;
		font-size: 16.3px;
		font-variant-ligatures: none;
		letter-spacing: 0;
		line-height: 25.5px;
	}

	.heads,
	.line {
		display: flex;
	}

	.heads {
		box-sizing: border-box;
		height: 25px;
		border-bottom: 1px solid #a6a6a6;
		background: #f0f0f0;
	}

	.corner,
	.rownum {
		box-sizing: border-box;
		flex: none;
		width: 34px;
	}

	.corner {
		display: flex;
		align-items: flex-end;
		justify-content: flex-end;
		padding: 0 3px 3px 0;
	}

	.head {
		box-sizing: border-box;
		flex: none;
		width: 101.35px;
		border-right: 1px solid #e2e2e2;
		color: #444;
		text-align: center;
	}

	.head.current {
		background: #d2f3e0;
		color: #217346;
	}

	.line {
		height: 25.34px;
	}

	.rownum {
		border-right: 2px solid #217346;
		border-bottom: 1px solid #cfcfcf;
		background: #e1e1e1;
		color: #217346;
		text-align: center;
	}

	.cell {
		box-sizing: border-box;
		flex: none;
		width: 101.35px;
		padding: 0 2.5px 0 3px;
		border-right: 1px solid #e6e6e6;
		border-bottom: 1px solid #e6e6e6;
	}

	.words {
		letter-spacing: 0.4px;
	}

	.num {
		text-align: right;
	}

	.clip {
		overflow: hidden;
	}

	.picked {
		border-color: #b5b5b5;
		background: #c6c6c6;
	}

	.spill {
		border-right-color: transparent;
	}

	.ants {
		position: absolute;
		top: 23px;
		left: 742px;
	}

	.pointer {
		position: absolute;
		top: 39px;
		left: 1042px;
	}

	.vscroll {
		display: flex;
		flex-direction: column;
		align-items: center;
		width: 15px;
		padding-top: 2px;
	}

	.vscroll span {
		width: 6px;
		height: 12px;
		margin-top: 2px;
		border-radius: 3px;
		background: #666;
	}

	.vscroll div {
		margin-top: auto;
	}

	/* Sheet tabs */
	.sheets {
		display: flex;
		align-items: center;
		flex: none;
		height: 21px;
		font-size: 9.3px;
	}

	.nav {
		display: flex;
		gap: 13px;
		width: 56px;
		padding-left: 17px;
	}

	.sheet-tab {
		box-sizing: border-box;
		width: 39px;
		padding-top: 1px;
		border-right: 1px solid #d8d8d8;
		text-align: center;
	}

	.sheet-tab.selected {
		align-self: flex-start;
		width: 35px;
		height: 19px;
		margin: 0 2px 0 3px;
		padding-top: 4px;
		border: 0;
		border-radius: 0 0 3px 3px;
		background: #fff;
	}

	.sheet-tab.selected b {
		display: inline-block;
		border-bottom: 1.5px solid #217346;
		font-weight: 600;
		font-size: 9.2px;
		letter-spacing: -0.3px;
	}

	.sheet-tab.last {
		width: 41px;
	}

	.add {
		margin-left: 27px;
	}

	.hscroll {
		display: flex;
		align-items: center;
		margin-left: auto;
		padding-right: 15px;
	}

	.hscroll .dots {
		margin-right: 13px;
	}

	.track {
		display: flex;
		width: 468px;
	}

	.thumb {
		width: 350px;
		height: 6px;
		margin-left: 89px;
		border-radius: 3px;
		background: #6b6b6b;
	}

	/* Status bar */
	.status {
		display: flex;
		align-items: center;
		flex: none;
		height: 16px;
		background: #f5f5f5;
		font-size: 7.8px;
	}

	.hint {
		padding-left: 7.5px;
		letter-spacing: -0.21px;
	}

	.status-right {
		display: flex;
		align-items: center;
		height: 100%;
		margin-left: auto;
		padding-right: 5px;
	}

	.count {
		width: 53px;
		margin-right: 13px;
	}

	.config {
		width: 105px;
		margin: 0 12px 0 2px;
		letter-spacing: -0.2px;
	}

	.view {
		display: flex;
		align-items: center;
		justify-content: center;
		width: 26.7px;
		height: 100%;
	}

	.view.on {
		background: #dedede;
	}

	.zoom {
		width: 18px;
		margin-left: 13px;
	}

	/* Taskbar */
	.taskbar {
		display: flex;
		flex: none;
		height: 31px;
		background: #1c1c1c;
		color: #f0f0f0;
	}

	.apps {
		display: flex;
		padding-left: 376.3px;
	}

	.app {
		position: relative;
		display: flex;
		align-items: center;
		justify-content: center;
		box-sizing: border-box;
		width: 29.35px;
		height: 30px;
	}

	.app.focused {
		background: radial-gradient(#333 60%, #262626);
		background-clip: content-box;
		padding: 2px;
	}

	.app.running::after,
	.app.focused::after {
		content: '';
		position: absolute;
		bottom: 2px;
		width: 4px;
		height: 1.5px;
		border-radius: 1px;
		background: #999;
	}

	.app.focused::after {
		width: 10px;
		background: #ccc;
	}

	.badge {
		position: absolute;
		top: 4px;
		right: 1px;
		width: 14px;
		height: 11px;
		border-radius: 6px;
		background: #c9bfe6;
		color: #222;
		text-align: center;
	}

	.tray {
		display: flex;
		align-items: center;
		height: 30px;
		margin-left: auto;
		padding-right: 13px;
	}

	.tray .icon + .icon {
		margin-left: 4px;
	}

	.tray .icon:nth-child(2) {
		margin-left: 11px;
	}

	.tray .icon:nth-child(3) {
		margin-left: 11px;
	}

	.lang {
		margin: 0 12px 0 13px;
		font-size: 7.8px;
	}

	.clock {
		display: flex;
		flex-direction: column;
		align-items: flex-end;
		width: 43px;
		font-size: 8.4px;
		letter-spacing: -0.15px;
	}

	.emblem {
		position: absolute;
		top: 0;
		left: 1214.500px;
	}
</style>
